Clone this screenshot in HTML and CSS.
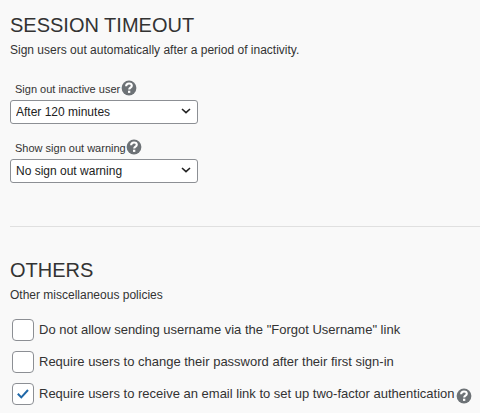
FILE: index.html
```html
<!DOCTYPE html>
<html lang="en">
<head>
    <meta charset="UTF-8">
    <meta name="viewport" content="width=device-width, initial-scale=1.0">
    <title>Security Policies</title>
    <link rel="stylesheet" href="styles.css">
</head>
<body>
    <svg width="0" height="0" class="defs">
        <symbol id="help" viewBox="0 0 16 16">
            <circle cx="8" cy="8" r="7.4" fill="#6d7276"/>
            <path d="M5.1 6.2C5.2 4.4 6.4 3.5 8 3.5c1.7 0 2.8.9 2.8 2.3 0 1.9-2.6 1.8-2.6 3.7" fill="none" stroke="#fff" stroke-width="2.1"/>
            <rect x="7" y="10.7" width="2.3" height="2.2" fill="#fff"/>
        </symbol>
    </svg>

    <section class="section">
        <h1>SESSION TIMEOUT</h1>
        <p class="description">Sign users out automatically after a period of inactivity.</p>

        <div class="field">
            <div class="field-label">
                <label for="timeout">Sign out inactive user</label>
                <svg class="help"><use href="#help"/></svg>
            </div>
            <div class="select">
                <select id="timeout">
                    <option>After 120 minutes</option>
                </select>
                <svg class="arrow" viewBox="0 0 10 6"><path d="M1 1l4 3.6L9 1"/></svg>
            </div>
        </div>

        <div class="field">
            <div class="field-label">
                <label for="warning">Show sign out warning</label>
                <svg class="help"><use href="#help"/></svg>
            </div>
            <div class="select">
                <select id="warning">
                    <option>No sign out warning</option>
                </select>
                <svg class="arrow" viewBox="0 0 10 6"><path d="M1 1l4 3.6L9 1"/></svg>
            </div>
        </div>
    </section>

    <section class="section others">
        <h1>OTHERS</h1>
        <p class="description">Other miscellaneous policies</p>

        <div class="options">
            <div class="option">
                <span class="checkbox"></span>
                <span class="option-text">Do not allow sending username via the "Forgot Username" link</span>
            </div>
            <div class="option">
                <span class="checkbox"></span>
                <span class="option-text">Require users to change their password after their first sign-in</span>
            </div>
            <div class="option">
                <span class="checkbox">
                    <svg class="check" viewBox="0 0 12 10"><path d="M.8 4.8l3.5 3.6L11 1"/></svg>
                </span>
                <span class="option-text">Require users to receive an email link to set up two-factor authentication</span>
                <svg class="help"><use href="#help"/></svg>
            </div>
        </div>
    </section>
</body>
</html>
```

FILE: styles.css
```css
* {
    box-sizing: border-box;
}
body {
    margin: 0;
    padding: 12px 0 0 10px;
    height: 413px;
    overflow: hidden;
    background-color: #f9f9f9;
    color: #333;
    font-family: "Liberation Sans", Arial, sans-serif;
}
.defs {
    display: none;
}
h1 {
    margin: 0;
    font-size: 20px;
    font-weight: 400;
    line-height: 26px;
}
.description {
    margin: 4px 0 0;
    font-size: 12px;
    line-height: 16px;
}
.field {
    margin-top: 15px;
}
.description + .field {
    margin-top: 22px;
}
.field-label {
    display: flex;
    height: 20px;
    padding-left: 5px;
    font-size: 11px;
    line-height: 18px;
}
.help {
    width: 16px;
    height: 16px;
}
.field-label .help {
    margin-left: 0.5px;
}
.select {
    display: flex;
    align-items: center;
    width: 188px;
    height: 24px;
    padding-right: 6px;
    border: 1px solid #8c8f94;
    border-radius: 3px;
    background-color: #fff;
}
select {
    appearance: none;
    flex: 1;
    padding: 0 0 0 5px;
    border: none;
    background: none;
    color: #222;
    font-family: inherit;
    font-size: 12px;
}
.arrow {
    width: 10px;
    height: 6px;
    margin-bottom: 2px;
    fill: none;
    stroke: #222;
    stroke-width: 1.6;
}
.others {
    margin-top: 43px;
    padding-top: 30px;
    border-top: 1px solid #e0e0e0;
}
.options {
    display: flex;
    flex-direction: column;
    gap: 10px;
    margin: 16px 0 0 2px;
}
.option {
    display: flex;
    height: 22px;
    font-size: 13px;
    line-height: 21px;
    white-space: nowrap;
}
.checkbox {
    display: flex;
    align-items: center;
    justify-content: center;
    width: 22px;
    height: 22px;
    margin-right: 5px;
    border: 1px solid #8c8f94;
    border-radius: 4px;
    background-color: #fff;
}
.check {
    width: 12px;
    height: 10px;
    margin: 0 1px 0 0;
    fill: none;
    stroke: #2068a8;
    stroke-width: 2;
}
.option .help {
    margin: 5px 0 0 1px;
}
```
